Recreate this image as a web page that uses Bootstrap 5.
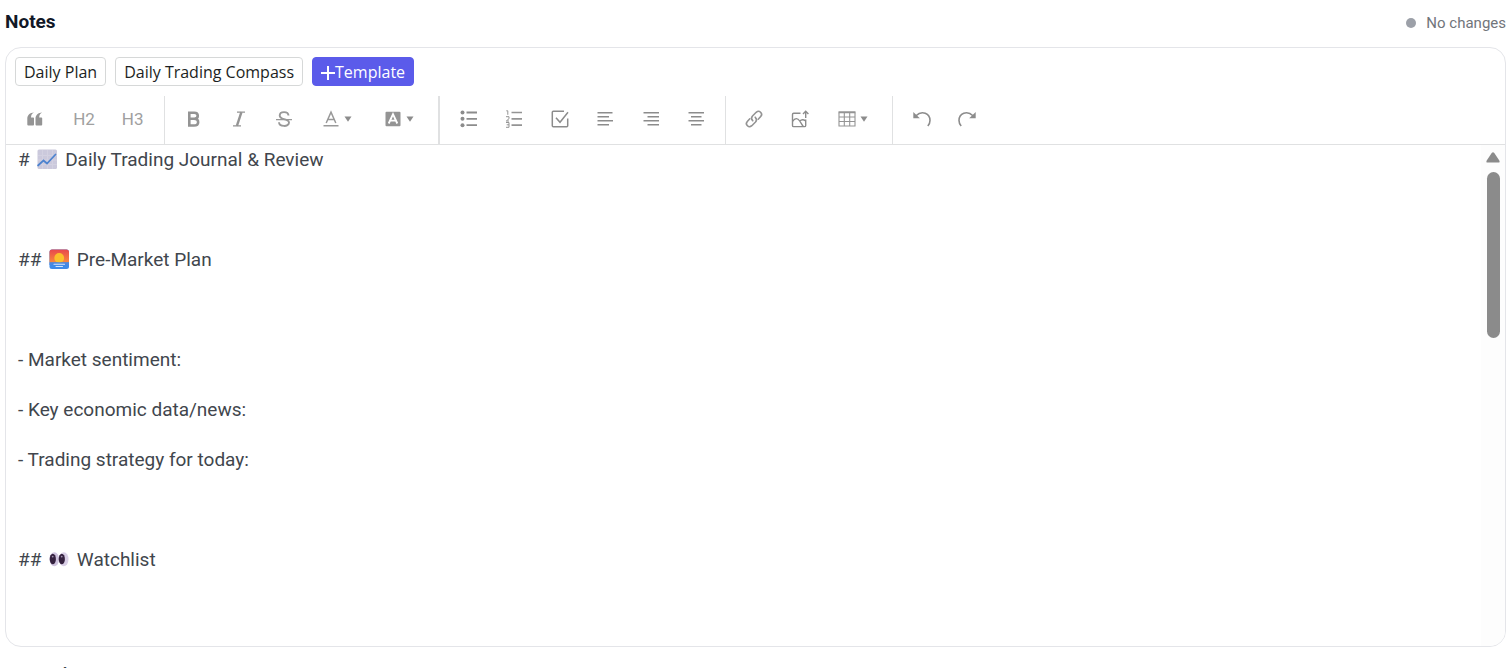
<!DOCTYPE html>
<html lang="en">
<head>
<meta charset="utf-8">
<meta name="viewport" content="width=device-width, initial-scale=1">
<title>Notes</title>
<link rel="stylesheet" href="https://cdn.jsdelivr.net/npm/bootstrap@5.3.0/dist/css/bootstrap.min.css">
<style>
  body { font-family: Roboto, sans-serif; color: #41464d; background: #fff; }
  .page { padding: 0 3px 0 5px; }
  .section-title { font-size: 19px; line-height: 22px; font-weight: 700; color: #111827; }
  .page-head { height: 47px; padding-bottom: 4px; }
  .save-state { font-size: 15px; line-height: 20px; color: #71757b; gap: 10px; padding-top: 2px; }
  .state-dot { width: 10px; height: 10px; background: #9ca0a8; }
  .editor { border: 1px solid #e4e5e9; border-radius: 16px; overflow: hidden; }
  .template-bar { gap: 9px; padding: 9px 9px 10px; }
  .template-bar .btn { font: 16px/26px "Open Sans", sans-serif; padding: 1px 8px 0; border-radius: 4px; border-color: #d6d8d8; color: #1c1f23; background: #fff; }
  .template-bar .btn-template { background: #5b5bea; border-color: #5b5bea; color: #fff; }
  .btn-template svg { width: 14px; height: 14px; margin-top: -2px; }
  .tool-row { border-bottom: 1px solid #e0e1e2; }
  .tool-group { height: 48px; padding: 0 7px 0 5px; border-right: 1px solid #e0e1e2; }
  .tool-group.wide-rule { border-right-width: 2px; }
  .tool-group:last-child { border-right: 0; }
  .group-head { width: 159px; }
  .group-marks { width: 275px; }
  .group-lists { width: 286px; padding: 0 6px; }
  .group-insert { width: 167px; }
  .group-history { width: 103px; padding: 0 6px; }
  .tool { flex: 1 1 0; border: 0; background: none; padding: 0 0 2px; color: #a0a0a0; font-size: 17px; line-height: 46px; display: flex; align-items: center; justify-content: center; }
  .tool-menu { flex: 0 0 62px; justify-content: flex-start; padding-left: 14px; gap: 4px; }
  .tool svg { width: 20px; height: 20px; }
  .tool .caret { width: 8px; height: 6px; }
  .tool-menu svg:first-child { margin-right: -1px; }
  .doc { padding: 0 12px 1px; font-size: 19px; line-height: 30px; outline: 0; }
  .doc p { min-height: 30px; margin-bottom: 20px; }
  .emoji { width: 22px; height: 22px; margin: -3px 2px 0; vertical-align: middle; }
  .rail { width: 24px; background: #fdfdfd; padding-top: 7px; }
  .rail svg { width: 14px; height: 11px; }
  .thumb { width: 13px; height: 166px; margin-top: 9px; border-radius: 7px; background: #8b8b8b; }
  .next-section { padding-top: 17px; }
</style>
</head>
<body>
<main class="page">
  <header class="page-head d-flex align-items-center justify-content-between">
    <h2 class="section-title mb-0">Notes</h2>
    <div class="save-state d-flex align-items-center"><span class="state-dot rounded-circle"></span>No changes</div>
  </header>

  <section class="editor">
    <div class="template-bar d-flex flex-wrap">
      <button type="button" class="btn">Daily Plan</button>
      <button type="button" class="btn">Daily Trading Compass</button>
      <button type="button" class="btn btn-template"><svg viewBox="0 0 14 14" stroke="#fff" stroke-width="2" fill="none" aria-hidden="true"><path d="M0 7h14M7 0v14"/></svg>Template</button>
    </div>

    <div class="tool-row d-flex flex-wrap" role="toolbar" aria-label="Formatting">
      <div class="tool-group group-head d-flex">
        <button type="button" class="tool" aria-label="Quote"><svg viewBox="0 0 20 20" fill="#949494"><path d="M9 3.500C7.200 4.200 6 6 6 8.500h2.200q.8 0 .8.8v6.200q0 1-.8 1H3.300q-1 0-1-1V10C2.300 6 5 3.700 9 3.500zM17.200 3.500c-1.800.7-3 2.500-3 5h2.200q.8 0 .8.8v6.200q0 1-.8 1h-4.900q-1 0-1-1V10c0-4 2.700-6.300 6.700-6.500z"/></svg></button>
        <button type="button" class="tool">H2</button>
        <button type="button" class="tool">H3</button>
      </div>

      <div class="tool-group group-marks wide-rule d-flex">
        <button type="button" class="tool" aria-label="Bold"><svg viewBox="0 0 20 20" fill="none" stroke="#949494" stroke-width="2.600"><path d="M5 3.800h6.300c4.600 0 4.600 6 0 6H6M11 9.800c5.500 0 5.500 6.700 0 6.700H5M6.300 3.800v12.700"/></svg></button>
        <button type="button" class="tool" aria-label="Italic"><svg viewBox="0 0 20 20" fill="none" stroke="#949494"><path d="M8 3.200h8M4 16.800h8" stroke-width="1.300"/><path d="M12.400 3.200 7.900 16.800" stroke-width="2.400"/></svg></button>
        <button type="button" class="tool" aria-label="Strikethrough"><svg viewBox="0 0 20 20" fill="none" stroke="#999" stroke-width="1.900"><path d="M14.500 6.500C14.200 2 5.800 2 5.700 6.500c0 2 1.700 3 4.300 3.600s5 1.300 5 3.500c0 4.500-9.800 4.500-10-.4"/><path d="M2 10.700h16" stroke-width="1.300"/></svg></button>
        <button type="button" class="tool tool-menu" aria-label="Text colour"><svg viewBox="0 0 20 20" fill="none" stroke="#999" stroke-width="1.500"><path d="M5.200 14 10 3.200 14.800 14M7 10.500h6M2.500 16.800h15"/></svg><svg class="caret" viewBox="0 0 8 6" fill="#8c8c8c"><path d="M.5.5h7L4 5.800z"/></svg></button>
        <button type="button" class="tool tool-menu" aria-label="Highlight colour"><svg viewBox="0 0 20 20"><rect x="2.500" y="2.800" width="15" height="14.400" rx="1" fill="#949494"/><path d="M5.700 14.500 10 5.200l4.300 9.300M7.200 11.600h5.600" fill="none" stroke="#fff" stroke-width="1.900"/></svg><svg class="caret" viewBox="0 0 8 6" fill="#8c8c8c"><path d="M.5.5h7L4 5.800z"/></svg></button>
      </div>

      <div class="tool-group group-lists d-flex">
        <button type="button" class="tool" aria-label="Bulleted list"><svg viewBox="0 0 20 20" fill="#8c8c8c"><circle cx="3.500" cy="3.500" r="2"/><circle cx="3.500" cy="9.800" r="2"/><circle cx="3.500" cy="16.200" r="2"/><path d="M7.500 2.600H18v1.800H7.500zM7.500 8.900H18v1.800H7.500zM7.500 15.300H18v1.800H7.500z"/></svg></button>
        <button type="button" class="tool" aria-label="Numbered list"><svg viewBox="0 0 20 20" fill="none" stroke="#949494"><path d="M7.500 3.500H18M7.500 9.800H18M7.500 16.200H18" stroke-width="1.700"/><path d="M2.300 1.800h1.500v4M2 7.700h3v2L2.300 12H5M2 13.500h3v4.800H2M2.700 15.800H5" stroke-width="1"/></svg></button>
        <button type="button" class="tool" aria-label="Task list"><svg viewBox="0 0 20 20" fill="none" stroke="#8c8c8c" stroke-width="1.500"><path d="M14 2.300H3.300q-1 0-1 1v13.400q0 1 1 1h13.400q1 0 1-1V9.500"/><path d="M6 8.800l4 4.500 8-10"/></svg></button>
        <button type="button" class="tool" aria-label="Align left"><svg viewBox="0 0 20 20" fill="none" stroke="#8c8c8c" stroke-width="1.500"><path d="M2.500 3.800h15M2.500 7.800h11.500M2.500 11.800h15.500M2.500 15.800h11.500"/></svg></button>
        <button type="button" class="tool" aria-label="Align right"><svg viewBox="0 0 20 20" fill="none" stroke="#8c8c8c" stroke-width="1.500"><path d="M2.500 3.800H18M6.500 7.800H18M2.500 11.800H18M6.500 15.800H18"/></svg></button>
        <button type="button" class="tool" aria-label="Align center"><svg viewBox="0 0 20 20" fill="none" stroke="#8c8c8c" stroke-width="1.500"><path d="M2.500 3.800h15.500M5 7.800h10.500M2.500 11.800h15.500M5 15.800h10.500"/></svg></button>
      </div>

      <div class="tool-group group-insert d-flex">
        <button type="button" class="tool" aria-label="Link"><svg viewBox="0 0 20 20" fill="none" stroke="#949494" stroke-width="1.600" stroke-linecap="round"><path d="M8.800 11.800C7 10 7.300 8.300 8.500 7l3.700-3.700c3-2.800 7.200 1.200 4.500 4.200l-2.500 2.700"/><path d="M11.200 8.200C13 10 12.700 11.700 11.500 13l-3.700 3.700c-3 2.800-7.200-1.200-4.500-4.200l2.500-2.700"/></svg></button>
        <button type="button" class="tool" aria-label="Image"><svg viewBox="0 0 20 20" fill="none" stroke="#8c8c8c" stroke-width="1.400"><path d="M10.500 4.200H3.700q-1.200 0-1.200 1.200v11q0 1.200 1.200 1.200h10.800q1.200 0 1.200-1.200V10.500"/><path d="M2.500 12.500c2.500-4 5.300-3.500 7.200-.5l3.500 5.500M9.800 12c2-2 4-1.500 5.900 0M15.700 9V2.300M13 5l2.700-2.800L18.400 5"/></svg></button>
        <button type="button" class="tool tool-menu" aria-label="Table"><svg viewBox="0 0 20 20" fill="none" stroke="#949494"><path d="M1.500 3.200h17" stroke-width="2"/><path d="M2 3.500v13.500h16V3.500M2 8h16M2 12.500h16M7.300 3.500V17M12.700 3.500V17" stroke-width="1.100"/></svg><svg class="caret" viewBox="0 0 8 6" fill="#8c8c8c"><path d="M.5.5h7L4 5.800z"/></svg></button>
      </div>

      <div class="tool-group group-history d-flex">
        <button type="button" class="tool" aria-label="Undo"><svg viewBox="0 0 20 20" fill="none" stroke="#8c8c8c" stroke-width="1.600"><path d="M4 6.800C10 .8 18 4.500 18 11.500c0 2-.8 4-2.200 5.500"/><path d="M1.300 3v6.300h6.500z" fill="#8c8c8c" stroke="none"/></svg></button>
        <button type="button" class="tool" aria-label="Redo"><svg viewBox="0 0 20 20" fill="none" stroke="#8c8c8c" stroke-width="1.600"><path d="M16 6.800C10 .8 2 4.500 2 11.500c0 2 .8 4 2.200 5.500"/><path d="M18.700 3v6.300h-6.500z" fill="#8c8c8c" stroke="none"/></svg></button>
      </div>
    </div>

    <div class="d-flex">
      <div class="doc flex-grow-1" contenteditable="true" role="textbox" aria-multiline="true" aria-label="Notes">
        <p># <svg class="emoji" viewBox="0 0 22 22" role="img" aria-label="Chart increasing"><rect x="1.500" y="1.500" width="19.500" height="19.500" rx="1.500" fill="#cbc9dc"/><path d="M2 7.500h19M2 12h19M2 16.500h19M6.500 2v19M11.500 2v19M16.500 2v19" stroke="#d3d1e1" stroke-width="1"/><path d="M2 17.500l5.500-5 3.500 3 8.500-9" fill="none" stroke="#4d83cf" stroke-width="1.700" stroke-linecap="round"/></svg> Daily Trading Journal &amp; Review</p>
        <p></p>
        <p>## <svg class="emoji" viewBox="0 0 22 22" role="img" aria-label="Sunrise"><defs><linearGradient id="sky" x2="0" y2="1"><stop offset="0" stop-color="#e8484d"/><stop offset="1" stop-color="#f98a3c"/></linearGradient></defs><rect x="1.500" y="1.500" width="19.500" height="19.500" rx="2.500" fill="#3f8ae6"/><path d="M1.500 14.500V4q0-2.500 2.500-2.500h14.500Q21 1.500 21 4v10.500z" fill="url(#sky)"/><circle cx="11.200" cy="10" r="4.900" fill="#fbc02b"/><path d="M1.500 14.300H21V17H1.500z" fill="#4b87df"/><path d="M6 16.300h10.500M8 18.500h6.500" stroke="#d5e5fa" stroke-width="1.100" stroke-linecap="round"/></svg> Pre-Market Plan</p>
        <p></p>
        <p>- Market sentiment:</p>
        <p>- Key economic data/news:</p>
        <p>- Trading strategy for today:</p>
        <p></p>
        <p>## <svg class="emoji" viewBox="0 0 22 22" role="img" aria-label="Eyes"><ellipse cx="6.300" cy="11.300" rx="4.700" ry="7" fill="#cfc3de"/><ellipse cx="15.800" cy="11.300" rx="4.700" ry="7" fill="#d9cfe6"/><ellipse cx="4.800" cy="11" rx="3.100" ry="5.300" fill="#35223f"/><ellipse cx="13.800" cy="11" rx="3.100" ry="5.300" fill="#35223f"/><circle cx="4.700" cy="8.600" r=".9" fill="#9d8fae"/><circle cx="13.700" cy="8.600" r=".9" fill="#9d8fae"/></svg> Watchlist</p>
        <p></p>
      </div>
      <div class="rail d-flex flex-column align-items-center" aria-hidden="true">
        <svg viewBox="0 0 14 11" fill="#8b8b8b"><path d="M5.700 1Q7-.6 8.300 1l5 7.500Q14.200 10.500 12.500 10.500H1.500Q-.2 10.500.7 8.500z"/></svg>
        <div class="thumb"></div>
      </div>
    </div>
  </section>

  <section class="next-section">
    <h2 class="section-title mb-0">Execution</h2>
  </section>
</main>
<script src="https://cdn.jsdelivr.net/npm/bootstrap@5.3.0/dist/js/bootstrap.bundle.min.js"></script>
</body>
</html>
